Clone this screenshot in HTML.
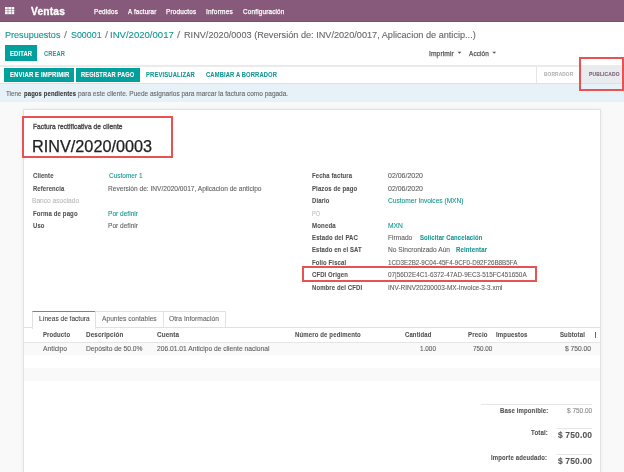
<!DOCTYPE html>
<html><head><meta charset="utf-8"><style>
html,body{margin:0;padding:0;width:624px;height:472px;overflow:hidden;background:#fff;position:relative}
.t{position:absolute;white-space:nowrap;line-height:1;font-family:"Liberation Sans", sans-serif;transform-origin:0 0}
#root{position:absolute;left:0;top:0;width:624px;height:472px;overflow:hidden;filter:blur(0.3px)}
.b{position:absolute}
</style></head><body><div id=root>
<!-- navbar -->
<div class=b style="left:0;top:0;width:624px;height:21px;background:#875A7B"></div>
<div class=b style="left:0;top:21px;width:624px;height:1px;background:#7a4f6f"></div>
<svg class=b style="left:4.5px;top:6.6px" width="10" height="8" viewBox="0 0 10 8"><g fill="#fff"><rect x="0.00" y="0.00" width="2.75" height="2.1"/><rect x="3.25" y="0.00" width="2.75" height="2.1"/><rect x="6.50" y="0.00" width="2.75" height="2.1"/><rect x="0.00" y="2.55" width="2.75" height="2.1"/><rect x="3.25" y="2.55" width="2.75" height="2.1"/><rect x="6.50" y="2.55" width="2.75" height="2.1"/><rect x="0.00" y="5.10" width="2.75" height="2.1"/><rect x="3.25" y="5.10" width="2.75" height="2.1"/><rect x="6.50" y="5.10" width="2.75" height="2.1"/></g></svg>
<!-- buttons -->
<div class=b style="left:5px;top:45px;width:32px;height:16px;background:#00A09D"></div>
<svg class=b style="left:456px;top:51px" width="6" height="4"><path d="M1.6 0.8h3.8l-1.9 2z" fill="#555"/></svg>
<svg class=b style="left:491px;top:51px" width="6" height="4"><path d="M1.3 0.8h3.8l-1.9 2z" fill="#555"/></svg>
<!-- statusbar -->
<div class=b style="left:0;top:65px;width:624px;height:2px;background:#ebebeb"></div>
<div class=b style="left:0;top:83px;width:624px;height:1px;background:#dde1e4"></div>
<div class=b style="left:4px;top:68px;width:70px;height:14px;background:#00A09D"></div>
<div class=b style="left:76px;top:68px;width:64px;height:14px;background:#00A09D"></div>
<div class=b style="left:536px;top:67px;width:1px;height:16px;background:#e5e5e5"></div>
<div class=b style="left:581px;top:67px;width:41px;height:16px;background:#e9ecef"></div>
<!-- alert -->
<div class=b style="left:0;top:84px;width:624px;height:18px;background:#e6f1f8"></div>
<!-- bg -->
<div class=b style="left:0;top:102px;width:624px;height:370px;background:#f9f9f9"></div>
<div class=b style="left:23px;top:109px;width:578px;height:363px;background:#e2e2e2;box-shadow:0 0 4px rgba(0,0,0,0.06)"></div>
<div class=b style="left:24px;top:110px;width:576px;height:362px;background:#fff"></div>
<!-- red boxes -->
<div class=b style="left:579px;top:57px;width:41px;height:30px;border:2px solid #e85252"></div>
<div class=b style="left:22px;top:116px;width:147px;height:38px;border:2px solid #e85252"></div>
<div class=b style="left:302px;top:266px;width:231px;height:12px;border:2px solid #e85252"></div>
<!-- tabs -->
<div class=b style="left:24px;top:327px;width:576px;height:1px;background:#dee2e6"></div>
<div class=b style="left:32px;top:311px;width:62px;height:17px;background:#fff;border:1px solid #dee2e6;border-top:1px solid #a07090;border-bottom:0"></div>
<div class=b style="left:95px;top:311px;width:68px;height:16px;border:1px solid #dee2e6;border-left:0;border-bottom:0"></div>
<div class=b style="left:163px;top:311px;width:62px;height:16px;border:1px solid #dee2e6;border-left:0;border-bottom:0"></div>
<!-- table -->
<div class=b style="left:24px;top:342px;width:576px;height:1px;background:#e5e5e5"></div>
<div class=b style="left:24px;top:343px;width:576px;height:12px;background:#f9f9f9"></div>
<div class=b style="left:24px;top:368px;width:576px;height:13px;background:#f9f9f9"></div>
<div class=b style="left:595px;top:332px;width:1.4px;height:6px;background:#666"></div>
<!-- totals -->
<div class=b style="left:481px;top:404px;width:111px;height:1px;background:#e5e5e5"></div>
<div class=b style="left:557px;top:428px;width:35px;height:1px;background:#e5e5e5"></div>
<div class=b style="left:557px;top:454px;width:35px;height:1px;background:#e5e5e5"></div>

<div class=t style="left:31.45px;top:6.64px;font-size:10px;font-weight:700;color:#fff;-webkit-text-stroke:0.3px #fff;letter-spacing:0.2px;transform:scaleX(1.0195)">Ventas</div><div class=t style="left:93.77px;top:7.57px;font-size:7.0px;font-weight:400;color:#fff;-webkit-text-stroke:0.25px #fff;letter-spacing:0.2px;transform:scaleX(0.9029)">Pedidos</div><div class=t style="left:128.02px;top:7.57px;font-size:7.0px;font-weight:400;color:#fff;-webkit-text-stroke:0.25px #fff;letter-spacing:0.2px;transform:scaleX(0.8930)">A facturar</div><div class=t style="left:166.47px;top:7.57px;font-size:7.0px;font-weight:400;color:#fff;-webkit-text-stroke:0.25px #fff;letter-spacing:0.2px;transform:scaleX(0.9130)">Productos</div><div class=t style="left:206.23px;top:7.57px;font-size:7.0px;font-weight:400;color:#fff;-webkit-text-stroke:0.25px #fff;letter-spacing:0.2px;transform:scaleX(0.9357)">Informes</div><div class=t style="left:242.77px;top:7.57px;font-size:7.0px;font-weight:400;color:#fff;-webkit-text-stroke:0.25px #fff;letter-spacing:0.2px;transform:scaleX(0.9067)">Configuración</div><div class=t style="left:4.90px;top:30.60px;font-size:9.1px;font-weight:400;color:#12958f;-webkit-text-stroke:0.1px #12958f;letter-spacing:0px;transform:scaleX(0.9964)">Presupuestos</div><div class=t style="left:64.30px;top:30.60px;font-size:9.1px;font-weight:400;color:#777;-webkit-text-stroke:0.1px #777;letter-spacing:0px;transform:scaleX(1.1636)">/</div><div class=t style="left:70.56px;top:30.60px;font-size:9.1px;font-weight:400;color:#12958f;-webkit-text-stroke:0.1px #12958f;letter-spacing:0px;transform:scaleX(0.9756)">S00001</div><div class=t style="left:105.10px;top:30.60px;font-size:9.1px;font-weight:400;color:#777;-webkit-text-stroke:0.1px #777;letter-spacing:0px;transform:scaleX(1.1636)">/</div><div class=t style="left:110.41px;top:30.60px;font-size:9.1px;font-weight:400;color:#12958f;-webkit-text-stroke:0.1px #12958f;letter-spacing:0px;transform:scaleX(1.0510)">INV/2020/0017</div><div class=t style="left:177.20px;top:30.60px;font-size:9.1px;font-weight:400;color:#777;-webkit-text-stroke:0.1px #777;letter-spacing:0px;transform:scaleX(1.2364)">/</div><div class=t style="left:184.10px;top:30.60px;font-size:9.1px;font-weight:400;color:#666;-webkit-text-stroke:0.1px #666;letter-spacing:0px;transform:scaleX(1.0054)">RINV/2020/0003 (Reversión de: INV/2020/0017, Aplicacion de anticip...)</div><div class=t style="left:9.78px;top:51.04px;font-size:6.8px;font-weight:700;color:#fff;-webkit-text-stroke:0.08px #fff;letter-spacing:0.15px;transform:scaleX(0.8634)">EDITAR</div><div class=t style="left:43.79px;top:51.04px;font-size:6.8px;font-weight:700;color:#1a9c99;-webkit-text-stroke:0.01px #1a9c99;letter-spacing:0.15px;transform:scaleX(0.8449)">CREAR</div><div class=t style="left:428.72px;top:50.56px;font-size:6.9px;font-weight:400;color:#555;-webkit-text-stroke:0.25px #555;letter-spacing:0.1px;transform:scaleX(0.9663)">Imprimir</div><div class=t style="left:469.23px;top:50.56px;font-size:6.9px;font-weight:400;color:#555;-webkit-text-stroke:0.25px #555;letter-spacing:0.1px;transform:scaleX(0.9318)">Acción</div><div class=t style="left:9.78px;top:72.34px;font-size:6.8px;font-weight:700;color:#fff;-webkit-text-stroke:0.08px #fff;letter-spacing:0.15px;transform:scaleX(0.8770)">ENVIAR E IMPRIMIR</div><div class=t style="left:81.09px;top:72.34px;font-size:6.8px;font-weight:700;color:#fff;-webkit-text-stroke:0.08px #fff;letter-spacing:0.15px;transform:scaleX(0.8381)">REGISTRAR PAGO</div><div class=t style="left:145.78px;top:72.34px;font-size:6.8px;font-weight:700;color:#12958f;-webkit-text-stroke:0.08px #12958f;letter-spacing:0.15px;transform:scaleX(0.8640)">PREVISUALIZAR</div><div class=t style="left:206.19px;top:72.34px;font-size:6.8px;font-weight:700;color:#12958f;-webkit-text-stroke:0.08px #12958f;letter-spacing:0.15px;transform:scaleX(0.8558)">CAMBIAR A BORRADOR</div><div class=t style="left:543.78px;top:72.33px;font-size:5.4px;font-weight:700;color:#b0b0b0;-webkit-text-stroke:0.08px #b0b0b0;letter-spacing:0.15px;transform:scaleX(0.8892)">BORRADOR</div><div class=t style="left:588.77px;top:72.33px;font-size:5.4px;font-weight:700;color:#7c5a73;-webkit-text-stroke:0.08px #7c5a73;letter-spacing:0.15px;transform:scaleX(0.9212)">PUBLICADO</div><div class=t style="left:6.00px;top:89.91px;font-size:7.2px;font-weight:400;color:#666;-webkit-text-stroke:0.1px #666;letter-spacing:0px;transform:scaleX(0.8686)">Tiene</div><div class=t style="left:23.79px;top:89.91px;font-size:7.2px;font-weight:700;color:#333;-webkit-text-stroke:0.08px #333;letter-spacing:0.15px;transform:scaleX(0.8206)">pagos pendientes</div><div class=t style="left:77.87px;top:89.91px;font-size:7.2px;font-weight:400;color:#666;-webkit-text-stroke:0.1px #666;letter-spacing:0px;transform:scaleX(0.9054)">para este cliente. Puede asignarios para marcar la factura como pagada.</div><div class=t style="left:32.56px;top:123.86px;font-size:6.9px;font-weight:400;color:#4a4a4a;-webkit-text-stroke:0.35px #4a4a4a;letter-spacing:0.1px;transform:scaleX(0.9489)">Factura rectificativa de cliente</div><div class=t style="left:31.79px;top:138.96px;font-size:16px;font-weight:400;color:#222;-webkit-text-stroke:0.25px #222;letter-spacing:0px;transform:scaleX(1.0150)">RINV/2020/0003</div><div class=t style="left:32.59px;top:172.21px;font-size:7.2px;font-weight:700;color:#505050;-webkit-text-stroke:0.08px #505050;letter-spacing:0.15px;transform:scaleX(0.8245)">Cliente</div><div class=t style="left:32.60px;top:184.61px;font-size:7.2px;font-weight:700;color:#505050;-webkit-text-stroke:0.08px #505050;letter-spacing:0.15px;transform:scaleX(0.8184)">Referencia</div><div class=t style="left:32.34px;top:197.21px;font-size:7.2px;font-weight:400;color:#b8b8b8;-webkit-text-stroke:0.1px #b8b8b8;letter-spacing:0px;transform:scaleX(0.9208)">Banco asociado</div><div class=t style="left:32.59px;top:209.61px;font-size:7.2px;font-weight:700;color:#505050;-webkit-text-stroke:0.08px #505050;letter-spacing:0.15px;transform:scaleX(0.8358)">Forma de pago</div><div class=t style="left:32.59px;top:222.21px;font-size:7.2px;font-weight:700;color:#505050;-webkit-text-stroke:0.08px #505050;letter-spacing:0.15px;transform:scaleX(0.8222)">Uso</div><div class=t style="left:108.57px;top:172.21px;font-size:7.2px;font-weight:400;color:#12958f;-webkit-text-stroke:0.1px #12958f;letter-spacing:0px;transform:scaleX(0.9034)">Customer 1</div><div class=t style="left:108.34px;top:184.61px;font-size:7.2px;font-weight:400;color:#5e5e5e;-webkit-text-stroke:0.1px #5e5e5e;letter-spacing:0px;transform:scaleX(0.9169)">Reversión de: INV/2020/0017, Aplicacion de anticipo</div><div class=t style="left:108.34px;top:209.61px;font-size:7.2px;font-weight:400;color:#12958f;-webkit-text-stroke:0.1px #12958f;letter-spacing:0px;transform:scaleX(0.9147)">Por definir</div><div class=t style="left:108.34px;top:222.21px;font-size:7.2px;font-weight:400;color:#5e5e5e;-webkit-text-stroke:0.1px #5e5e5e;letter-spacing:0px;transform:scaleX(0.9147)">Por definir</div><div class=t style="left:311.89px;top:172.21px;font-size:7.2px;font-weight:700;color:#505050;-webkit-text-stroke:0.08px #505050;letter-spacing:0.15px;transform:scaleX(0.8247)">Fecha factura</div><div class=t style="left:311.89px;top:184.61px;font-size:7.2px;font-weight:700;color:#505050;-webkit-text-stroke:0.08px #505050;letter-spacing:0.15px;transform:scaleX(0.8333)">Plazos de pago</div><div class=t style="left:311.90px;top:197.21px;font-size:7.2px;font-weight:700;color:#505050;-webkit-text-stroke:0.08px #505050;letter-spacing:0.15px;transform:scaleX(0.8193)">Diario</div><div class=t style="left:311.72px;top:209.61px;font-size:7.2px;font-weight:400;color:#b8b8b8;-webkit-text-stroke:0.1px #b8b8b8;letter-spacing:0px;transform:scaleX(0.7692)">PO</div><div class=t style="left:311.89px;top:222.21px;font-size:7.2px;font-weight:700;color:#505050;-webkit-text-stroke:0.08px #505050;letter-spacing:0.15px;transform:scaleX(0.8468)">Moneda</div><div class=t style="left:311.89px;top:234.21px;font-size:7.2px;font-weight:700;color:#505050;-webkit-text-stroke:0.08px #505050;letter-spacing:0.15px;transform:scaleX(0.8349)">Estado del PAC</div><div class=t style="left:311.89px;top:246.41px;font-size:7.2px;font-weight:700;color:#505050;-webkit-text-stroke:0.08px #505050;letter-spacing:0.15px;transform:scaleX(0.8216)">Estado en el SAT</div><div class=t style="left:311.89px;top:258.51px;font-size:7.2px;font-weight:700;color:#505050;-webkit-text-stroke:0.08px #505050;letter-spacing:0.15px;transform:scaleX(0.8272)">Folio Fiscal</div><div class=t style="left:311.89px;top:271.41px;font-size:7.2px;font-weight:700;color:#505050;-webkit-text-stroke:0.08px #505050;letter-spacing:0.15px;transform:scaleX(0.8256)">CFDI Origen</div><div class=t style="left:311.89px;top:284.01px;font-size:7.2px;font-weight:700;color:#505050;-webkit-text-stroke:0.08px #505050;letter-spacing:0.15px;transform:scaleX(0.8285)">Nombre del CFDI</div><div class=t style="left:387.76px;top:172.21px;font-size:7.2px;font-weight:400;color:#5e5e5e;-webkit-text-stroke:0.1px #5e5e5e;letter-spacing:0px;transform:scaleX(0.9706)">02/06/2020</div><div class=t style="left:387.76px;top:184.61px;font-size:7.2px;font-weight:400;color:#5e5e5e;-webkit-text-stroke:0.1px #5e5e5e;letter-spacing:0px;transform:scaleX(0.9706)">02/06/2020</div><div class=t style="left:387.77px;top:197.21px;font-size:7.2px;font-weight:400;color:#12958f;-webkit-text-stroke:0.1px #12958f;letter-spacing:0px;transform:scaleX(0.9174)">Customer Invoices (MXN)</div><div class=t style="left:387.53px;top:222.21px;font-size:7.2px;font-weight:400;color:#12958f;-webkit-text-stroke:0.1px #12958f;letter-spacing:0px;transform:scaleX(0.9333)">MXN</div><div class=t style="left:387.54px;top:234.21px;font-size:7.2px;font-weight:400;color:#5e5e5e;-webkit-text-stroke:0.1px #5e5e5e;letter-spacing:0px;transform:scaleX(0.9204)">Firmado</div><div class=t style="left:387.54px;top:246.41px;font-size:7.2px;font-weight:400;color:#5e5e5e;-webkit-text-stroke:0.1px #5e5e5e;letter-spacing:0px;transform:scaleX(0.9238)">No Sincronizado Aún</div><div class=t style="left:387.56px;top:258.51px;font-size:7.2px;font-weight:400;color:#5e5e5e;-webkit-text-stroke:0.1px #5e5e5e;letter-spacing:0px;transform:scaleX(0.8702)">1CD3E2B2-9C04-45F4-9CF0-D92F26B8B5FA</div><div class=t style="left:387.78px;top:271.41px;font-size:7.2px;font-weight:400;color:#5e5e5e;-webkit-text-stroke:0.1px #5e5e5e;letter-spacing:0px;transform:scaleX(0.8836)">07|56D2E4C1-6372-47AD-9EC3-515FC451650A</div><div class=t style="left:387.55px;top:284.01px;font-size:7.2px;font-weight:400;color:#5e5e5e;-webkit-text-stroke:0.1px #5e5e5e;letter-spacing:0px;transform:scaleX(0.8988)">INV-RINV20200003-MX-Invoice-3-3.xml</div><div class=t style="left:419.59px;top:234.21px;font-size:7.2px;font-weight:700;color:#12958f;-webkit-text-stroke:0.08px #12958f;letter-spacing:0.15px;transform:scaleX(0.8239)">Solicitar Cancelación</div><div class=t style="left:456.19px;top:246.41px;font-size:7.2px;font-weight:700;color:#12958f;-webkit-text-stroke:0.08px #12958f;letter-spacing:0.15px;transform:scaleX(0.8408)">Reintentar</div><div class=t style="left:38.63px;top:315.37px;font-size:7.0px;font-weight:400;color:#444;-webkit-text-stroke:0.1px #444;letter-spacing:0px;transform:scaleX(0.9358)">Líneas de factura</div><div class=t style="left:102.30px;top:315.37px;font-size:7.0px;font-weight:400;color:#666;-webkit-text-stroke:0.1px #666;letter-spacing:0px;transform:scaleX(0.9496)">Apuntes contables</div><div class=t style="left:169.46px;top:315.37px;font-size:7.0px;font-weight:400;color:#666;-webkit-text-stroke:0.1px #666;letter-spacing:0px;transform:scaleX(0.9573)">Otra Información</div><div class=t style="left:42.98px;top:331.66px;font-size:6.9px;font-weight:700;color:#505050;-webkit-text-stroke:0.08px #505050;letter-spacing:0.15px;transform:scaleX(0.8645)">Producto</div><div class=t style="left:85.97px;top:331.66px;font-size:6.9px;font-weight:700;color:#505050;-webkit-text-stroke:0.08px #505050;letter-spacing:0.15px;transform:scaleX(0.9136)">Descripción</div><div class=t style="left:156.97px;top:331.66px;font-size:6.9px;font-weight:700;color:#505050;-webkit-text-stroke:0.08px #505050;letter-spacing:0.15px;transform:scaleX(0.9167)">Cuenta</div><div class=t style="left:294.68px;top:331.66px;font-size:6.9px;font-weight:700;color:#505050;-webkit-text-stroke:0.08px #505050;letter-spacing:0.15px;transform:scaleX(0.8720)">Número de pedimento</div><div class=t style="left:404.68px;top:331.66px;font-size:6.9px;font-weight:700;color:#505050;-webkit-text-stroke:0.08px #505050;letter-spacing:0.15px;transform:scaleX(0.8633)">Cantidad</div><div class=t style="left:467.78px;top:331.66px;font-size:6.9px;font-weight:700;color:#505050;-webkit-text-stroke:0.08px #505050;letter-spacing:0.15px;transform:scaleX(0.8930)">Precio</div><div class=t style="left:495.78px;top:331.66px;font-size:6.9px;font-weight:700;color:#505050;-webkit-text-stroke:0.08px #505050;letter-spacing:0.15px;transform:scaleX(0.8794)">Impuestos</div><div class=t style="left:559.50px;top:331.66px;font-size:6.9px;font-weight:700;color:#505050;-webkit-text-stroke:0.08px #505050;letter-spacing:0.15px;transform:scaleX(0.8673)">Subtotal</div><div class=t style="left:43.20px;top:345.66px;font-size:6.9px;font-weight:400;color:#5e5e5e;-webkit-text-stroke:0.1px #5e5e5e;letter-spacing:0px;transform:scaleX(0.9796)">Anticipo</div><div class=t style="left:85.72px;top:345.66px;font-size:6.9px;font-weight:400;color:#5e5e5e;-webkit-text-stroke:0.1px #5e5e5e;letter-spacing:0px;transform:scaleX(0.9697)">Depósito de 50.0%</div><div class=t style="left:156.96px;top:345.66px;font-size:6.9px;font-weight:400;color:#5e5e5e;-webkit-text-stroke:0.1px #5e5e5e;letter-spacing:0px;transform:scaleX(0.9718)">206.01.01 Anticipo de cliente nacional</div><div class=t style="left:419.94px;top:345.66px;font-size:6.9px;font-weight:400;color:#5e5e5e;-webkit-text-stroke:0.1px #5e5e5e;letter-spacing:0px;transform:scaleX(0.9254)">1.000</div><div class=t style="left:473.27px;top:345.66px;font-size:6.9px;font-weight:400;color:#5e5e5e;-webkit-text-stroke:0.1px #5e5e5e;letter-spacing:0px;transform:scaleX(0.9157)">750.00</div><div class=t style="left:565.40px;top:345.66px;font-size:6.9px;font-weight:400;color:#5e5e5e;-webkit-text-stroke:0.1px #5e5e5e;letter-spacing:0px;transform:scaleX(0.9682)">$ 750.00</div><div class=t style="left:499.58px;top:408.46px;font-size:6.9px;font-weight:700;color:#505050;-webkit-text-stroke:0.08px #505050;letter-spacing:0.15px;transform:scaleX(0.8734)">Base imponible:</div><div class=t style="left:566.50px;top:408.46px;font-size:6.9px;font-weight:400;color:#888;-webkit-text-stroke:0.1px #888;letter-spacing:0px;transform:scaleX(0.9383)">$ 750.00</div><div class=t style="left:531.00px;top:430.46px;font-size:6.9px;font-weight:700;color:#505050;-webkit-text-stroke:0.08px #505050;letter-spacing:0.15px;transform:scaleX(0.8865)">Total:</div><div class=t style="left:557.80px;top:431.32px;font-size:8.6px;font-weight:700;color:#555;-webkit-text-stroke:0.08px #555;letter-spacing:0.15px;transform:scaleX(0.9869)">$ 750.00</div><div class=t style="left:491.48px;top:455.46px;font-size:6.9px;font-weight:700;color:#505050;-webkit-text-stroke:0.08px #505050;letter-spacing:0.15px;transform:scaleX(0.8706)">Importe adeudado:</div><div class=t style="left:557.80px;top:456.82px;font-size:8.6px;font-weight:700;color:#555;-webkit-text-stroke:0.08px #555;letter-spacing:0.15px;transform:scaleX(0.9869)">$ 750.00</div>
</div></body></html>
